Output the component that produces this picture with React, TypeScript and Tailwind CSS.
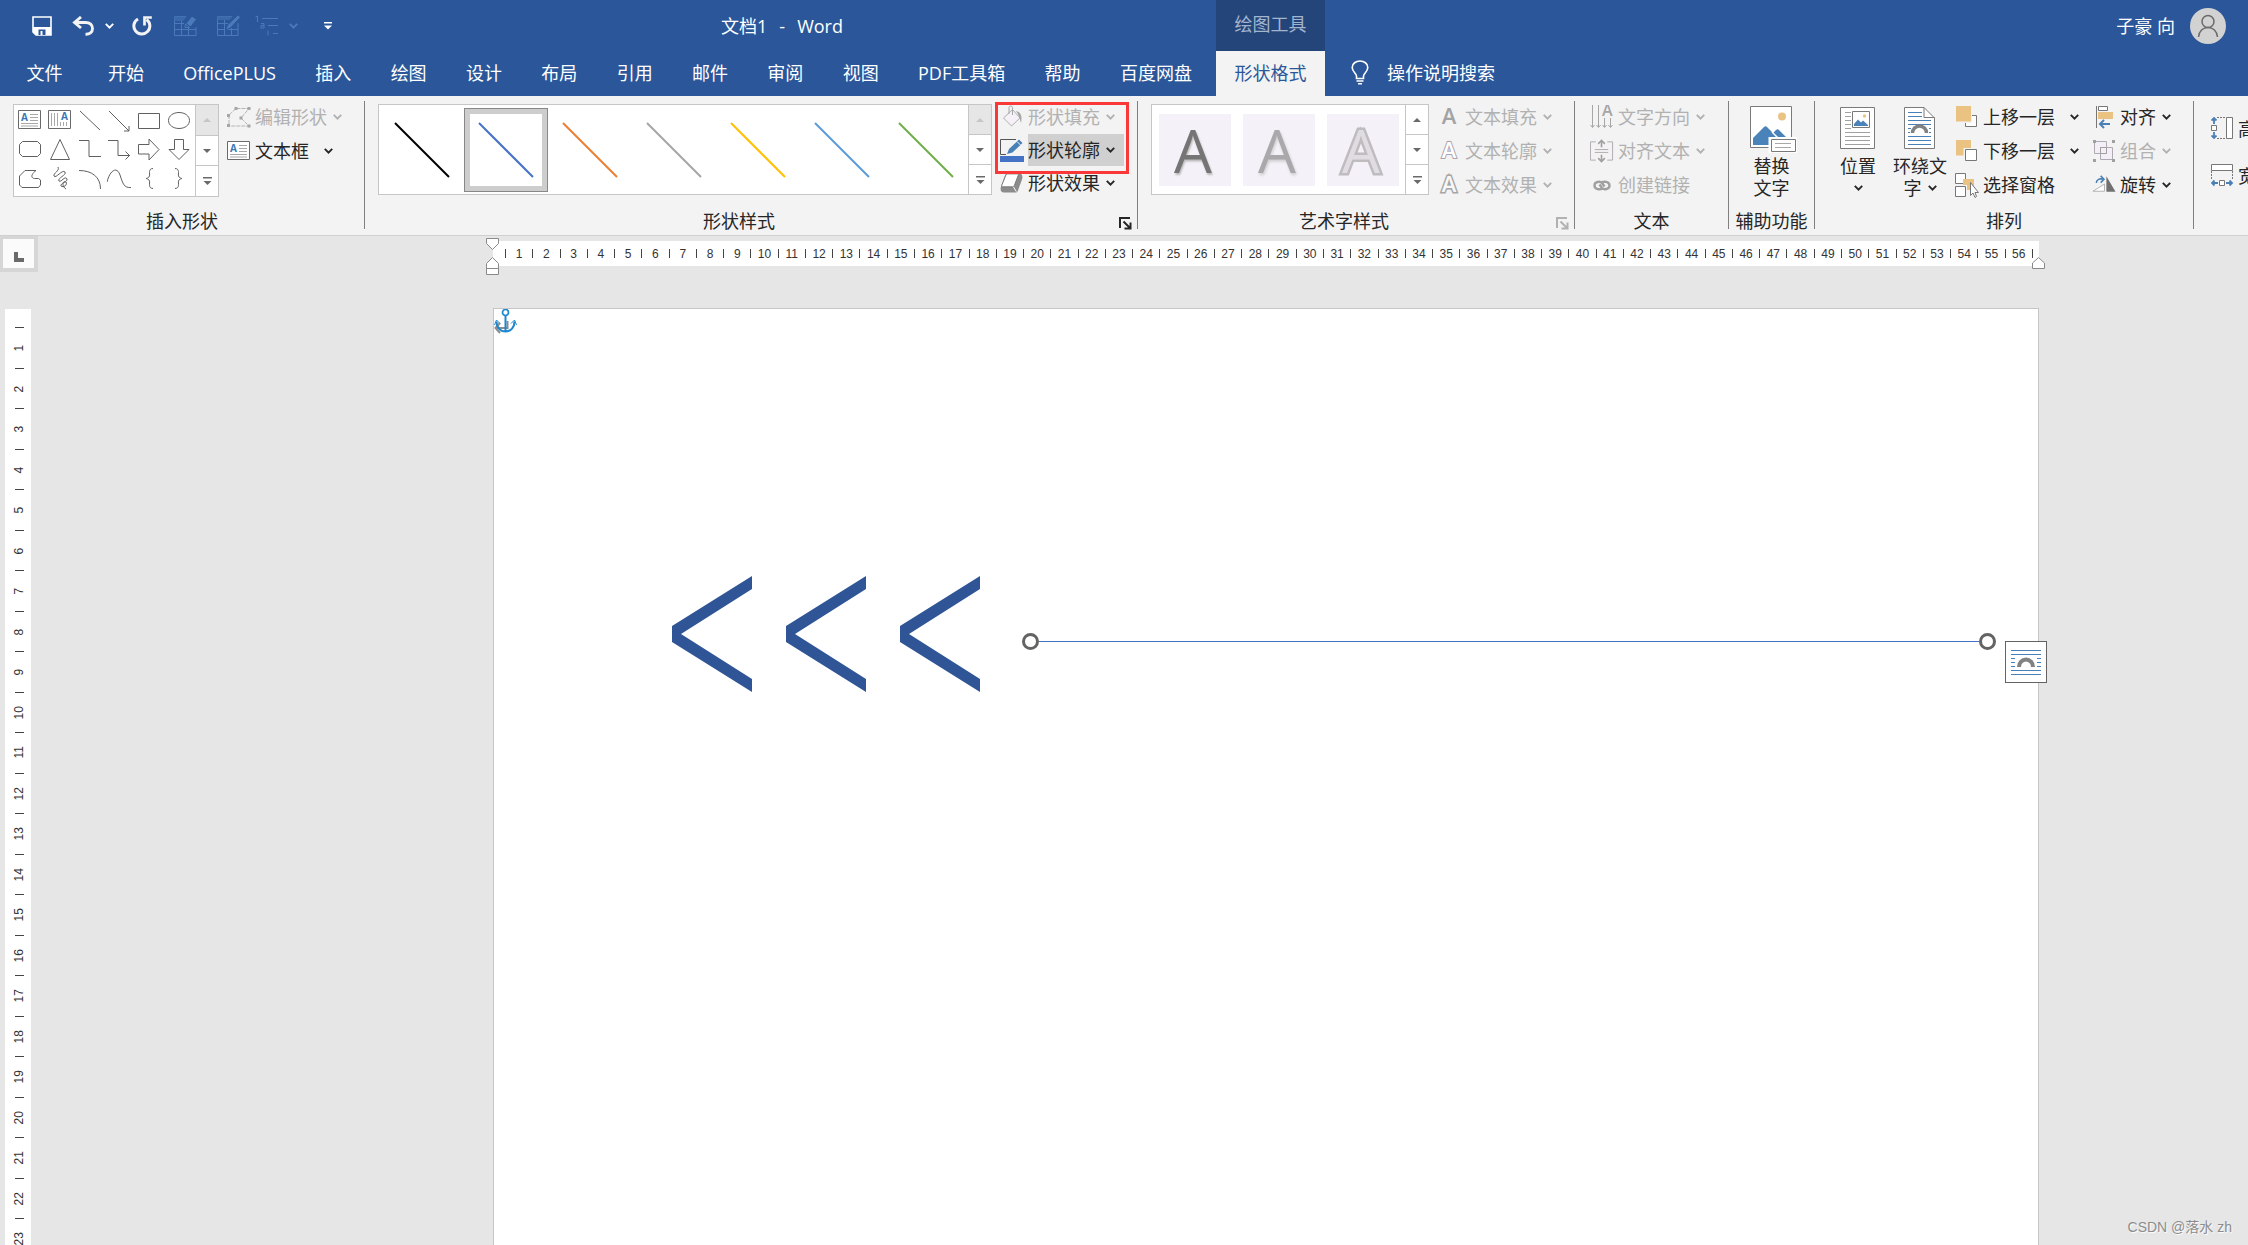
import React from "react";

type IconProps = { className?: string };

function Chevron({ className = "" }: IconProps) {
  return (
    <svg width="9" height="6" viewBox="0 0 9 6" className={`shrink-0 ${className}`}>
      <path d="M0.8 0.8 L4.5 4.6 L8.2 0.8" fill="none" stroke="currentColor" strokeWidth="1.9" />
    </svg>
  );
}

function SaveIcon() {
  return (
    <svg width="20" height="20" viewBox="0 0 20 20">
      <path d="M1 1h18v18H4L1 16z" fill="none" stroke="#fff" strokeWidth="1.6" />
      <path d="M1 11h18v8H4l-3-3z" fill="#fff" />
      <path d="M6.500 13.500h7V19h-7z" fill="#2b579a" />
      <path d="M8.500 15h2v4h-2z" fill="#fff" />
    </svg>
  );
}

function UndoIcon() {
  return (
    <svg width="23" height="20" viewBox="0 0 23 20">
      <path d="M9 1 L2.500 6.500 L9 12 M3 6.500 H13.500 C18 6.500 20.500 9 20.500 12.500 C20.500 16.500 17.500 18.500 13.500 18.300" fill="none" stroke="#f3f3f3" strokeWidth="2.900" />
    </svg>
  );
}

function RedoIcon() {
  return (
    <svg width="20" height="20" viewBox="0 0 20 20">
      <path d="M6 3 A8 8 0 1 0 14.500 3.500" fill="none" stroke="#f3f3f3" strokeWidth="3" />
      <path d="M12.500 9.500 V1.500 H19.800" fill="none" stroke="#f3f3f3" strokeWidth="2.700" />
    </svg>
  );
}

function TableEraserIcon() {
  return (
    <svg width="23" height="22" viewBox="0 0 23 22" fill="none" stroke="#4a7ab8">
      <path d="M.5 1.500V20.500H22V12M.5 1.500H12M.5 8.500H10M.5 14.500H22M7.500 6v14M14.500 13v7" />
      <path d="M.5 1.500H13L9 6H.5z" fill="#3a69a9" stroke="none" />
      <path d="M12 8.500L18 1L22.500 4.500L16.500 12z" fill="#4a7ab8" stroke="#2b579a" />
      <path d="M11.500 9L15.500 12.500H11z" />
    </svg>
  );
}

function TablePencilIcon() {
  return (
    <svg width="24" height="23" viewBox="0 0 24 23" fill="none" stroke="#4a7ab8">
      <path d="M.5 2.500V21.500H21V9M.5 2.500H15M.5 9.500H11M.5 15.500H21M7.500 6v15M14.500 14v7" />
      <path d="M.5 2.500H16L12.500 6H.5z" fill="#3a69a9" stroke="none" />
      <path d="M8.500 16L10.500 11L21 .8L23.500 3.200L13.500 14z" fill="#4a7ab8" stroke="#2b579a" />
    </svg>
  );
}

function MultiListIcon() {
  return (
    <svg width="24" height="22" viewBox="0 0 24 22" fill="none" stroke="#4a7ab8">
      <path d="M.5 2 2.500 1V7M7 3.500H23M13 10.500H23M18 18.500H23" />
      <path d="M6 8.500H9V13H6V10.500H9M13 15.500V20.500" />
    </svg>
  );
}

function CustomizeIcon() {
  return (
    <svg width="8" height="8" viewBox="0 0 8 8" fill="#fff">
      <path d="M0 0h8v1.500H0zM0 3.500h8L4 7.500z" />
    </svg>
  );
}

function BulbIcon() {
  return (
    <svg width="18" height="25" viewBox="0 0 18 25" fill="none" stroke="#fff" strokeWidth="1.600">
      <path d="M5.500 18.500V16C5.500 13.500 1.200 12 1.200 7.500C1.200 3.500 5 1 9 1S16.800 3.500 16.800 7.500C16.800 12 12.500 13.500 12.500 16V18.500Z" />
      <path d="M5.500 21H12.500M7 23.700H11" />
    </svg>
  );
}

function TextBoxIcon() {
  return (
    <svg width="24" height="20" viewBox="0 0 24 20">
      <path d="M.5.5h22v18H.5z" fill="#fff" stroke="#6a6a6a" />
      <path d="M12 4.500h8M12 7.500h8M12 10.500h8M3 13.500h17M3 16h17" stroke="#a8a8a8" />
      <text x="3" y="11" fontSize="10" fontWeight="700" fill="#3b78b5">A</text>
    </svg>
  );
}

function VerticalTextBoxIcon() {
  return (
    <svg width="24" height="20" viewBox="0 0 24 20">
      <path d="M.5.5h22v18H.5z" fill="#fff" stroke="#6a6a6a" />
      <path d="M3.500 3v13M6.500 3v13M9.500 3v13M12.500 12v4M15.500 12v4M18.500 12v4" stroke="#a8a8a8" />
      <text x="13" y="10" fontSize="10" fontWeight="700" fill="#3b78b5">A</text>
    </svg>
  );
}

// 24x24 outlines of the shape picker, in reading order after the text boxes
const shapePaths = [
  { name: "直线", d: "M2 3 L22 22" },
  { name: "箭头", d: "M2 3 L22 23 M22 18V23H17" },
  { name: "矩形", d: "M1.500 5.500h21v15h-21z" },
  { name: "椭圆", d: "M12 4.500c6 0 10.500 3.500 10.500 8s-4.500 8-10.500 8-10.500-3.500-10.500-8 4.500-8 10.500-8z" },
  { name: "圆角矩形", d: "M4.500 4.500h15l3 3v9l-3 3h-15l-3-3v-9z" },
  { name: "三角形", d: "M12 2.500 L21.500 22.500H2.500z" },
  { name: "肘形连接符", d: "M1 3.500H11V19.500H23" },
  { name: "肘形箭头", d: "M1 3.500H11V18.500H23 M18.500 14.500L22.500 18.500L18.500 22.500" },
  { name: "右箭头", d: "M1.500 7.500H12V2L22 12.500L12 23V17H1.500z" },
  { name: "下箭头", d: "M7.500 2.500H16.500V12.500H22L12 22.500L2 12.500H7.500z" },
  { name: "任意多边形", d: "M7 4.500H18C12 9 13 13 18 12.500H20.500L22.500 14V19L20.500 21.500H4L1.500 19V10z" },
  { name: "自由曲线", d: "M10 1C12 5 5 7 6 10C8 13 14 3 17 6C19 9 9 12 11 15C13 17 17 9 19 13C20 16 12 17 13 20C15 22 20 19 18 16C15 14 13 20 18 23" },
  { name: "弧形", d: "M1 4.500C14 4.500 22.500 11 22.500 23" },
  { name: "曲线", d: "M0 16C3 4 10 0 13 9S17 22 24 21.500" },
  { name: "左大括号", d: "M16 2.500C11 2.500 13 8 12.500 10S9 12.500 9 12.500S12 13 12.500 15S11 22.500 16 22.500" },
  { name: "右大括号", d: "M8 2.500C13 2.500 11 8 11.500 10S15 12.500 15 12.500S12 13 11.500 15S13 22.500 8 22.500" },
];

function EditShapeIcon() {
  return (
    <svg width="24" height="21" viewBox="0 0 24 21" fill="none" stroke="#b5b5b5">
      <path d="M2 8V19M2 8L9 1.500H22L14 11L22 19H2" strokeDasharray="4 1" />
      <path fill="#a6a6a6" stroke="none" d="M0 7h3v3H0zM0 17h3v3H0zM7.500 0h3v3h-3zM20.500 0h3v3h-3zM12.500 9.500h3v3h-3zM20.500 17.500h3v3h-3z" />
    </svg>
  );
}

function FillIcon() {
  return (
    <svg width="24" height="24" viewBox="0 0 24 24">
      <path d="M3.500 13L12.500 4.500L20 13L11.500 21z" fill="#f6f0f8" stroke="#b0b0b0" />
      <path d="M9 9V2.500C9 .5 12.500 .5 12.500 2.500V10" fill="none" stroke="#a6a6a6" />
      <path d="M16 6C21 7 22.500 11 21 18C20 15 20 12 16 6z" fill="#a6a6a6" />
    </svg>
  );
}

function OutlineIcon() {
  return (
    <svg width="24" height="25" viewBox="0 0 24 25">
      <path d="M16 1.500H.5V16.500H6" fill="none" stroke="#555" />
      <path d="M7 16L9 11L19 1.500L22.500 5L12.500 14.500z" fill="#4a80b8" />
      <path d="M17 3.500L20.500 7" stroke="#f3f3f3" />
      <path d="M0 18h24v6H0z" fill="#4472c4" />
    </svg>
  );
}

function EffectIcon() {
  return (
    <svg width="25" height="22" viewBox="0 0 25 22">
      <path d="M8 1H20C23 1 24 4 23 7L19 18C18 21 17 21 14 21H4C1 21 0 18 1 15L5 4C5.500 2 6 1 8 1z" fill="#8c8c8c" />
      <path d="M8 1.500H18C19 1.500 19.500 2 19 3L15 13.500C14.500 14.500 14 15 13 15H3C2 15 1.500 14 2 13L6 3C6.500 2 7 1.500 8 1.500z" fill="#fff" stroke="#777" />
      <path d="M14 15L17 20" stroke="#fff" />
    </svg>
  );
}

function LetterIcon({ variant }: { variant: "fill" | "outline" | "effect" }) {
  const paint = {
    fill: { fill: "#a3a3a3", stroke: "none", strokeWidth: 0 },
    outline: { fill: "#fff", stroke: "#aaa3ae", strokeWidth: 2 },
    effect: { fill: "#f8f8f8", stroke: "#a6a6a6", strokeWidth: 3 },
  }[variant];
  return (
    <svg width="24" height="24" viewBox="0 0 24 24">
      <text x="12" y="19" textAnchor="middle" fontSize="22" fontWeight="600" paintOrder="stroke" {...paint}>A</text>
    </svg>
  );
}

function TextDirectionIcon() {
  return (
    <svg width="24" height="24" viewBox="0 0 24 24" fill="none" stroke="#a6a6a6">
      <path d="M2.500 0V22M8.500 0V22M14.500 13V22M20.500 13V22M.5 20L2.500 22.500L4.500 20M6.500 20L8.500 22.500L10.500 20M12.500 20L14.500 22.500L16.500 20M18.500 20L20.500 22.500L22.500 20" />
      <text x="12" y="11" fontSize="16" fontWeight="600" fill="#a6a6a6" stroke="none">A</text>
    </svg>
  );
}

function AlignTextIcon() {
  return (
    <svg width="25" height="24" viewBox="0 0 25 24" fill="none" stroke="#b0a9b4">
      <path d="M6 2.500H.5V21.500H6M18 2.500H23.500V21.500H18M5 10.500H19M5 13.500H19" />
      <path d="M12 8V1M8.500 4.500L12 1L15.500 4.500M12 16V23M8.500 19.500L12 23L15.500 19.500" stroke="#a0a0a0" strokeWidth="1.700" />
    </svg>
  );
}

function LinkIcon() {
  return (
    <svg width="18" height="11" viewBox="0 0 18 11" fill="none" stroke="#a0a0a0" strokeWidth="2.400">
      <path d="M9.500 8.500C7 10 1.500 9.500 1.500 5.500S7 1 9 3L11.500 6.500" />
      <path d="M8.500 2.500C11 1 16.500 1.500 16.500 5.500S11 10 9 8L6.500 4.500" />
    </svg>
  );
}

function AltTextIcon() {
  return (
    <svg width="47" height="47" viewBox="0 0 47 47" className="ml-1">
      <path d="M.5.500h41v41H.5z" fill="#fff" stroke="#7a7a7a" />
      <circle cx="32" cy="10.500" r="4" fill="#eac282" />
      <path d="M3 39V32L14 21C15 20 16 20 17 21L23 27L26 24C27 23 28 23 29 24L38 33V39z" fill="#4a82ba" />
      <path d="M22 26L35 39" stroke="#fff" strokeWidth="1.500" />
      <path d="M20 32.500h26v14H20z" fill="#fff" stroke="#fff" strokeWidth="3" />
      <path d="M21.500 33.500h24v12h-24z" fill="#fff" stroke="#7a7a7a" />
      <path d="M25 37.500H41M25 41.500H41" stroke="#a8a8a8" />
    </svg>
  );
}

function PositionIcon() {
  return (
    <svg width="36" height="43" viewBox="0 0 36 43">
      <path d="M.5.500h34v41H.5z" fill="#fff" stroke="#7a7a7a" />
      <path d="M5 5.500h6M5 9.500h6M5 13.500h6M5 17.500h6M5 21.500h6M5 25.500h25M5 29.500h25M5 33.500h25M5 37.500h25" stroke="#a0a0a0" />
      <path d="M12.500 4.500h17v16h-17z" fill="#fff" stroke="#7a7a7a" />
      <circle cx="24.500" cy="9" r="1.700" fill="#eac282" />
      <path d="M14 19V17L18 12.500L21 15.500L23 13.500L28 18V19z" fill="#4a82ba" />
    </svg>
  );
}

function WrapTextIcon() {
  return (
    <svg width="32" height="43" viewBox="0 0 32 43">
      <path d="M.5.500H20L30.500 11V41.500H.5z" fill="#fff" stroke="#7a7a7a" />
      <path d="M20 .5V10.500H30.500" fill="none" stroke="#7a7a7a" />
      <path d="M4 5.500H18M4 9.500H18M4 13.500H27M4 17.500H27M4 21.500H7M25 21.500H27M4 25.500H6M25 25.500H27M4 29.500H27M4 33.500H27M4 37.500H27" stroke="#4a80b8" />
      <path d="M8.500 26A7 7 0 0 1 22.500 26" fill="#fff" stroke="#828282" strokeWidth="3.500" />
    </svg>
  );
}

function BringForwardIcon() {
  return (
    <svg width="24" height="22" viewBox="0 0 24 22">
      <path d="M10.500 9.500h11v11h-11z" fill="#fff" stroke="#777" />
      <path d="M0 0h17v17H0z" fill="#f3f3f3" />
      <path d="M1 0h15v15.500H1z" fill="#eac282" />
    </svg>
  );
}

function SendBackwardIcon() {
  return (
    <svg width="24" height="22" viewBox="0 0 24 22">
      <path d="M1 0h15v15.500H1z" fill="#eac282" />
      <path d="M8.500 8h15v14h-15z" fill="#f3f3f3" />
      <path d="M10.500 9.500h11v11h-11z" fill="#fff" stroke="#777" />
    </svg>
  );
}

function SelectionPaneIcon() {
  return (
    <svg width="24" height="25" viewBox="0 0 24 25">
      <path d="M.5.500h10v10H.5zM.5 13.500h10v10H.5z" fill="#fff" stroke="#777" />
      <path d="M8 6h11v11H12V12H8z" fill="#eac282" />
      <path d="M15.500 9.500V22.500L18 20L20 24.500L21.500 23.500L20 19.500H23.500z" fill="#fff" stroke="#777" />
    </svg>
  );
}

function AlignIcon() {
  return (
    <svg width="24" height="24" viewBox="0 0 24 24">
      <path d="M4.500 1V23" stroke="#777" />
      <path d="M6.500 1.500h9v4h-9z" fill="#fff" stroke="#777" />
      <path d="M6 7h15v7H6z" fill="#eac282" />
      <path d="M18 19H8M12 15L8 19L12 23" fill="none" stroke="#4a80b8" strokeWidth="2" />
    </svg>
  );
}

function GroupIcon() {
  return (
    <svg width="24" height="22" viewBox="0 0 24 22">
      <path d="M2.500 1.500h12v12h-12zM8.500 7.500h12v12h-12z" fill="#f4eef7" stroke="#b0a9b4" />
      <path d="M8.500 7.500h6v6h-6z" fill="none" stroke="#a0a0a0" />
      <path d="M1 0h3v3H1zM20 0h3v3h-3zM1 19h3v3H1zM20 19h3v3h-3z" fill="#a0a0a0" />
    </svg>
  );
}

function RotateIcon() {
  return (
    <svg width="25" height="20" viewBox="0 0 25 20">
      <path d="M1 16.500L13 9V16.500z" fill="#fff" stroke="#b0b0b0" />
      <path d="M15 1L24.500 17H15z" fill="#707070" />
      <path d="M4.500 8C4.500 4 8 3 12 4M9 .5L12.500 4L9 7.500" fill="none" stroke="#4a80b8" strokeWidth="1.600" />
    </svg>
  );
}

function HeightIcon() {
  return (
    <svg width="23" height="23" viewBox="0 0 23 23" fill="none" stroke="#777">
      <path d="M15.500.500h6v21h-6zM.5 8.500h5v5h-5z" fill="#fff" />
      <path d="M6 .5H15M6 21.500H15" strokeDasharray="2 1" />
      <path d="M3 7V1M.5 3.500L3 1L5.500 3.500M3 15V21M.5 18.500L3 21L5.500 18.500" stroke="#4a80b8" strokeWidth="1.800" />
    </svg>
  );
}

function WidthIcon() {
  return (
    <svg width="23" height="23" viewBox="0 0 23 23" fill="none" stroke="#777">
      <path d="M.5.500h21v6H.5zM8.500 16.500h5v5h-5z" fill="#fff" />
      <path d="M.5 7V16M21.500 7V16" strokeDasharray="2 1" />
      <path d="M7 19H1M3.500 16.500L1 19L3.500 21.500M15 19H21M18.500 16.500L21 19L18.500 21.500" stroke="#4a80b8" strokeWidth="1.800" />
    </svg>
  );
}

function LauncherIcon() {
  return (
    <svg width="13" height="13" viewBox="0 0 13 13" fill="none" stroke="currentColor" strokeWidth="2">
      <path d="M1 11V1H11" />
      <path d="M4.500 4.500L11 11M11.500 5.500V11.500H5.500" />
    </svg>
  );
}

function AnchorIcon() {
  return (
    <svg width="23" height="26" viewBox="0 0 23 26" fill="none">
      <path d="M13.500 12V19H3M6 14L1.500 19L6 24" stroke="#8c8c8c" strokeWidth="2" />
      <circle cx="11.500" cy="3.500" r="3" stroke="#1e88cf" strokeWidth="1.700" />
      <path d="M11.500 7V23M2.500 12.500C2.500 18 6 22.500 11.500 22.500S20.500 18 20.500 12.500" stroke="#1e88cf" strokeWidth="2" />
      <path d="M.5 16L2.500 11L6 14.500M22.500 16L20.500 11L17 14.500" stroke="#1e88cf" />
    </svg>
  );
}

function LayoutOptionsIcon() {
  return (
    <svg width="30" height="25" viewBox="0 0 30 25" fill="none" stroke="#4a80b8">
      <path d="M0 .5H30M0 4.500H30M0 8.500H4M26 8.500H30M0 12.500H4M26 12.500H30M0 16.500H4M26 16.500H30M0 20.500H30M0 24.500H30" />
      <path d="M8 17A7 7.500 0 0 1 22 17" stroke="#828282" strokeWidth="4" />
    </svg>
  );
}

function GalleryScroll({ upDisabled = false }: { upDisabled?: boolean }) {
  return (
    <div className="flex w-[23px] shrink-0 flex-col divide-y divide-[#c6c6c6] border-l border-[#c6c6c6] text-[#6a6a6a]">
      <button
        aria-label="上一行"
        disabled={upDisabled}
        className="flex flex-1 items-center justify-center disabled:bg-[#e6e6e6] disabled:text-[#c6c6c6]"
      >
        <svg width="8" height="4" viewBox="0 0 8 4" fill="currentColor"><path d="M0 4L4 0L8 4z" /></svg>
      </button>
      <button aria-label="下一行" className="flex flex-1 items-center justify-center">
        <svg width="8" height="4" viewBox="0 0 8 4" fill="currentColor"><path d="M0 0L4 4L8 0z" /></svg>
      </button>
      <button aria-label="其他" className="flex flex-1 items-center justify-center">
        <svg width="9" height="8" viewBox="0 0 9 8" fill="currentColor"><path d="M0 0h9v1.500H0zM.5 4L4.500 8L8.500 4z" /></svg>
      </button>
    </div>
  );
}

function RibbonGroup({
  label,
  launcher,
  className = "",
  children,
}: {
  label: string;
  launcher?: "enabled" | "disabled";
  className?: string;
  children: React.ReactNode;
}) {
  return (
    <>
      <section className={`flex shrink-0 flex-col pt-1 pb-1 ${className}`}>
        <div className="flex h-[99px]">{children}</div>
        <div className="mt-3 flex h-5 items-center leading-5">
          <h2 className="flex-1 text-center whitespace-nowrap">{label}</h2>
          {launcher && (
            <button
              aria-label={`${label}设置`}
              disabled={launcher === "disabled"}
              className="flex w-6 justify-center pt-1 disabled:text-[#b1b1b1]"
            >
              <LauncherIcon />
            </button>
          )}
        </div>
      </section>
      <div className="mt-[5px] h-32 w-px shrink-0 bg-[#808080]" />
    </>
  );
}

function RibbonButton({
  icon,
  label,
  chevron,
  disabled = false,
}: {
  icon: React.ReactNode;
  label: string;
  chevron?: "near" | "far";
  disabled?: boolean;
}) {
  return (
    <button disabled={disabled} className="flex h-[34px] items-center whitespace-nowrap disabled:text-[#b1b1b1]">
      <span className="mr-1 flex w-6 shrink-0 justify-center">{icon}</span>
      {label}
      {chevron === "near" && <Chevron className="ml-1.5" />}
      {chevron === "far" && <Chevron className="ml-[15px]" />}
    </button>
  );
}

const tabs = [
  "开始", "OfficePLUS", "插入", "绘图", "设计", "布局", "引用", "邮件",
  "审阅", "视图", "PDF工具箱", "帮助", "百度网盘",
];

const lineStyles = [
  { name: "黑色", color: "#000000" },
  { name: "蓝色", color: "#4472c4" },
  { name: "橙色", color: "#ed7d31" },
  { name: "灰色", color: "#a5a5a5" },
  { name: "金色", color: "#ffc000" },
  { name: "浅蓝", color: "#5b9bd5" },
  { name: "绿色", color: "#70ad47" },
];

const wordArtStyles = [
  { name: "深灰填充", className: "text-[#757575] [text-shadow:1px_2px_2px_#bbb]" },
  { name: "浅灰填充", className: "text-[#aaa8ab] [text-shadow:1px_2px_3px_#ccc]" },
  { name: "灰色轮廓", className: "text-[#e0dce2] [-webkit-text-stroke:5px_#bfbcc0] [paint-order:stroke]" },
];

function TitleBar() {
  return (
    <div className="flex h-[51px] items-center text-white">
      <div className="flex flex-1 items-center pl-8">
        <button aria-label="保存"><SaveIcon /></button>
        <button aria-label="撤消" className="ml-5"><UndoIcon /></button>
        <button aria-label="撤消列表" className="ml-2.5"><Chevron /></button>
        <button aria-label="重复" className="ml-[18px]"><RedoIcon /></button>
        <button aria-label="擦除表格" disabled className="ml-[22px]"><TableEraserIcon /></button>
        <button aria-label="绘制表格" disabled className="ml-5"><TablePencilIcon /></button>
        <button aria-label="多级列表" disabled className="ml-3.5"><MultiListIcon /></button>
        <button aria-label="多级列表选项" disabled className="ml-2.5 text-[#4a7ab8]"><Chevron /></button>
        <button aria-label="自定义快速访问工具栏" className="ml-[26px]"><CustomizeIcon /></button>
        <h1 className="flex flex-1 justify-center gap-3 pl-4">
          <span>文档1</span>
          <span>-</span>
          <span>Word</span>
        </h1>
      </div>
      <div className="flex h-full w-[109px] shrink-0 items-center justify-center bg-[#234579] pb-1 text-[#a3b4cf]">绘图工具</div>
      <div className="flex w-[923px] shrink-0 items-center justify-end pr-[22px]">
        <span>子豪 向</span>
        <button aria-label="帐户" className="ml-[15px] flex size-9 items-center justify-center rounded-full bg-[#d2d2d2]">
          <svg width="22" height="24" viewBox="0 0 22 24" fill="none" stroke="#6a6a6a" strokeWidth="1.500">
            <circle cx="11" cy="7.500" r="6" />
            <path d="M1.500 23C2 17 6 13.500 11 13.500S20 17 20.500 23" />
          </svg>
        </button>
      </div>
    </div>
  );
}

function TabBar() {
  return (
    <nav className="flex h-[45px] text-white">
      <button className="w-[89px] shrink-0 pb-0.5 text-center">文件</button>
      <div className="flex min-w-0 flex-1 justify-between pr-[5px] pb-0.5">
        {tabs.map((tab) => (
          <button key={tab} className="px-[19px] whitespace-nowrap">{tab}</button>
        ))}
      </div>
      <button className="w-[109px] shrink-0 bg-[#f3f3f3] pb-0.5 text-[#2b579a]">形状格式</button>
      <div className="flex w-[923px] shrink-0 items-center pb-0.5">
        <button className="flex items-center gap-[18px] pl-[26px]">
          <BulbIcon />
          操作说明搜索
        </button>
      </div>
    </nav>
  );
}

function Ribbon() {
  return (
    <div className="flex shrink-0 overflow-hidden border-b border-[#d0d0d0] bg-[#f3f3f3] text-[#262626]">
      <RibbonGroup label="插入形状" className="w-[364px]">
        <div className="mt-1 ml-[13px] flex h-[93px] w-[206px] border border-[#c6c6c6] bg-white">
          <div className="grid flex-1 grid-cols-6 place-items-center px-px pb-1">
            <button aria-label="文本框"><TextBoxIcon /></button>
            <button aria-label="竖排文本框"><VerticalTextBoxIcon /></button>
            {shapePaths.map((shape) => (
              <button key={shape.name} aria-label={shape.name}>
                <svg width="24" height="24" viewBox="0 0 24 24" fill="none" stroke="#606060">
                  <path d={shape.d} />
                </svg>
              </button>
            ))}
          </div>
          <GalleryScroll upDisabled />
        </div>
        <div className="ml-2">
          <RibbonButton icon={<EditShapeIcon />} label="编辑形状" chevron="near" disabled />
          <RibbonButton icon={<TextBoxIcon />} label="文本框" chevron="far" />
        </div>
      </RibbonGroup>

      <RibbonGroup label="形状样式" launcher="enabled" className="w-[772px]">
        <div className="mt-1 ml-[13px] flex h-[91px] w-[614px] border border-[#c6c6c6] bg-white">
          <div className="flex flex-1 items-center pl-px">
            {lineStyles.map((style, index) => (
              <button
                key={style.name}
                aria-label={style.name}
                className={`flex size-[84px] items-center justify-center ${
                  index === 1 ? "border border-[#888] ring-[5px] ring-[#cdcdcd] ring-inset" : ""
                }`}
              >
                <svg width="56" height="56" viewBox="0 0 56 56">
                  <path d="M1 1L55 55" stroke={style.color} strokeWidth="2" />
                </svg>
              </button>
            ))}
          </div>
          <GalleryScroll upDisabled />
        </div>
        <div className="relative ml-1.5 flex w-[126px] flex-col">
          <div className="flex pl-0.5">
            <RibbonButton icon={<FillIcon />} label="形状填充" chevron="near" disabled />
          </div>
          <button className="flex h-[34px] items-center bg-[#d0d0d0] whitespace-nowrap">
            <span className="flex h-8 w-[30px] items-center justify-center bg-[#f3f3f3] pr-0.5"><OutlineIcon /></span>
            形状轮廓
            <Chevron className="ml-1.5" />
          </button>
          <div className="flex pl-0.5">
            <RibbonButton icon={<EffectIcon />} label="形状效果" chevron="near" />
          </div>
          <div className="pointer-events-none absolute top-0.5 -left-[3px] h-[72px] w-[134px] border-3 border-[#fb3838]" />
        </div>
      </RibbonGroup>

      <RibbonGroup label="艺术字样式" launcher="disabled" className="w-[436px]">
        <div className="mt-1 ml-[13px] flex h-[91px] w-[278px] border border-[#c6c6c6] bg-white">
          <div className="flex flex-1 items-center gap-3 pl-[7px]">
            {wordArtStyles.map((style) => (
              <button
                key={style.name}
                aria-label={style.name}
                className="flex size-[72px] items-center justify-center bg-[#f5f1f8] pr-1"
              >
                <span className={`text-[60px] leading-[72px] font-medium ${style.className}`}>A</span>
              </button>
            ))}
          </div>
          <GalleryScroll />
        </div>
        <div className="ml-2">
          <RibbonButton icon={<LetterIcon variant="fill" />} label="文本填充" chevron="near" disabled />
          <RibbonButton icon={<LetterIcon variant="outline" />} label="文本轮廓" chevron="near" disabled />
          <RibbonButton icon={<LetterIcon variant="effect" />} label="文本效果" chevron="near" disabled />
        </div>
      </RibbonGroup>

      <RibbonGroup label="文本" className="w-[153px]">
        <div className="ml-[15px]">
          <RibbonButton icon={<TextDirectionIcon />} label="文字方向" chevron="near" disabled />
          <RibbonButton icon={<AlignTextIcon />} label="对齐文本" chevron="near" disabled />
          <RibbonButton icon={<LinkIcon />} label="创建链接" disabled />
        </div>
      </RibbonGroup>

      <RibbonGroup label="辅助功能" className="w-[85px]">
        <button className="flex flex-1 flex-col items-center pt-1.5 leading-[22px]">
          <AltTextIcon />
          <span className="mt-0.5 w-10">替换文字</span>
        </button>
      </RibbonGroup>

      <RibbonGroup label="排列" className="w-[378px]">
        <button className="ml-3 flex w-[62px] flex-col items-center pt-[7px] leading-[22px]">
          <PositionIcon />
          <span className="mt-[5px]">位置</span>
          <Chevron className="mt-2" />
        </button>
        <button className="flex w-[62px] flex-col items-center pt-[7px] leading-[22px]">
          <WrapTextIcon />
          <span className="mt-[5px]">环绕文</span>
          <span className="flex items-center gap-1.5">字<Chevron /></span>
        </button>
        <div className="ml-1 w-[137px]">
          <RibbonButton icon={<BringForwardIcon />} label="上移一层" chevron="far" />
          <RibbonButton icon={<SendBackwardIcon />} label="下移一层" chevron="far" />
          <RibbonButton icon={<SelectionPaneIcon />} label="选择窗格" />
        </div>
        <div>
          <RibbonButton icon={<AlignIcon />} label="对齐" chevron="near" />
          <RibbonButton icon={<GroupIcon />} label="组合" chevron="near" disabled />
          <RibbonButton icon={<RotateIcon />} label="旋转" chevron="near" />
        </div>
      </RibbonGroup>

      <section className="flex flex-col gap-3.5 pt-4 pl-[17px]">
        <button className="flex h-[33px] items-center gap-1 whitespace-nowrap"><HeightIcon />高</button>
        <button className="flex h-[33px] items-center gap-1 whitespace-nowrap"><WidthIcon />宽</button>
      </section>
    </div>
  );
}

const range = (count: number) => Array.from({ length: count }, (_, i) => i + 1);

function HorizontalRuler() {
  return (
    <div className="relative mt-[5px] flex h-[25px] shrink-0 items-center bg-white pr-1.5 pl-3 text-xs">
      {range(56).map((n) => (
        <div key={n} className="flex flex-1 items-center">
          <span className="h-[9px] w-px bg-[#444]" />
          <span className="flex w-0 flex-1 justify-center">{n}</span>
        </div>
      ))}
      <span className="h-[9px] w-px bg-[#444]" />
      <svg width="14" height="38" viewBox="0 0 14 38" className="absolute -top-[3px] -left-[7px]" fill="#fff" stroke="#8a8a8a">
        <path d="M.5.500h12v5L6.500 11.500L.5 5.500zM.5 30.500h12v6H.5zM.5 30.500V25.500L6.500 19.500L12.500 25.500V30.500z" />
      </svg>
      <svg width="14" height="13" viewBox="0 0 14 13" className="absolute top-4 -right-[7px]" fill="#fff" stroke="#8a8a8a">
        <path d="M.5 11.500V6L6.500 .5L12.500 6V11.500z" />
      </svg>
    </div>
  );
}

function VerticalRuler() {
  return (
    <div className="mt-[37px] ml-[5px] w-[26px] flex-1 overflow-hidden bg-white pt-[18px] pl-0.5 text-xs">
      <div className="flex h-[932px] flex-col">
        {range(23).map((n) => (
          <div key={n} className="flex flex-1 flex-col items-center">
            <span className="h-px w-[9px] bg-[#444]" />
            <span className="flex flex-1 rotate-180 items-center justify-center [writing-mode:vertical-rl]">{n}</span>
          </div>
        ))}
      </div>
    </div>
  );
}

function Page() {
  return (
    <div className="relative mt-[42px] flex-1 border border-b-0 border-[#c6c6c6] bg-white">
      <div className="absolute top-0 left-0"><AnchorIcon /></div>
      <div className="absolute top-[267px] left-[178px] flex gap-[34px]">
        {range(3).map((n) => (
          <svg key={n} width="80" height="116" viewBox="0 0 80 116">
            <path d="M80 0V13L9 58L80 103V116L0 66V50z" fill="#2f5597" />
          </svg>
        ))}
      </div>
      <div className="absolute top-[324px] right-[42px] left-[528px] flex items-center">
        <span className="size-[17px] rounded-full border-3 border-[#636363]" />
        <span className="h-px flex-1 bg-[#4472c4]" />
        <span className="size-[17px] rounded-full border-3 border-[#636363]" />
      </div>
      <button
        aria-label="布局选项"
        className="absolute top-[332px] -right-[9px] flex size-[42px] items-center justify-center border border-[#636363] bg-white"
      >
        <LayoutOptionsIcon />
      </button>
    </div>
  );
}

export default function App() {
  return (
    <div className="flex h-screen flex-col overflow-hidden bg-[#e6e6e6] font-['Open_Sans','Noto_Sans_CJK_SC',sans-serif] text-lg">
      <header className="shrink-0 bg-[#2b579a]">
        <TitleBar />
        <TabBar />
      </header>
      <Ribbon />
      <main className="relative flex min-h-0 flex-1 font-['Liberation_Sans','Noto_Sans_CJK_SC',sans-serif] text-[#333]">
        <div className="flex w-[493px] shrink-0 flex-col">
          <button
            aria-label="制表符"
            className="flex h-9 w-[38px] shrink-0 items-center justify-center border-t-3 border-r-4 border-b-4 border-l-3 border-[#d6d6d6] bg-[#fbfbfb] pt-1.5"
          >
            <svg width="10" height="10" viewBox="0 0 10 10"><path d="M0 0h4v6h6v4H0z" fill="#6a6a6a" /></svg>
          </button>
          <VerticalRuler />
        </div>
        <div className="flex flex-1 flex-col">
          <HorizontalRuler />
          <Page />
        </div>
        <div className="w-[209px] shrink-0" />
        <p className="absolute right-4 bottom-2 text-sm text-[#8c8c8c] [text-shadow:1px_1px_1px_#fff]">CSDN @落水 zh</p>
      </main>
    </div>
  );
}
